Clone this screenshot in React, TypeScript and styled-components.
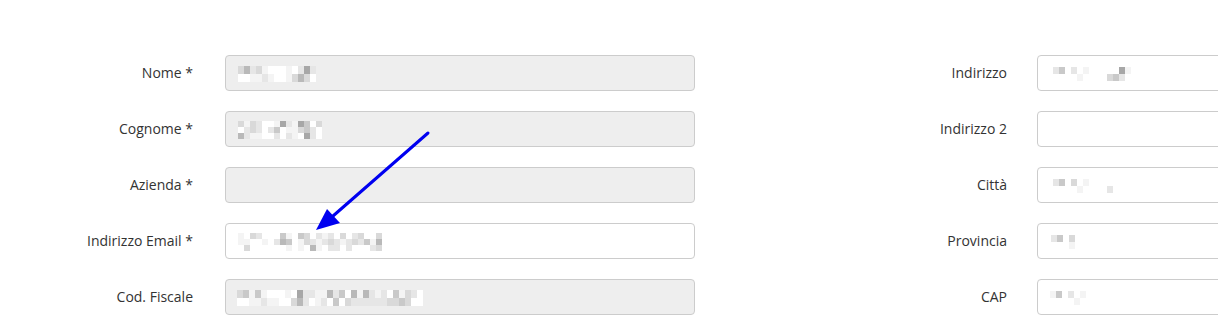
import React from 'react';
import styled, { createGlobalStyle } from 'styled-components';

const GlobalStyle = createGlobalStyle`
  body {
    margin: 0;
    background: #fff;
    font-family: "Open Sans", "Liberation Sans", sans-serif;
    overflow: hidden;
  }
`

// grey levels used by the pixelated (censored) field values
const shades: { [k: string]: string } = {
  '.': 'transparent',
  w: '#ffffff',
  a: '#f4f4f4',
  b: '#e6e6e6',
  c: '#d9d9d9',
  d: '#c9c9c9',
  e: '#b9b9b9',
  f: '#a7a7a7',
}

type Field = {
  label: string
  disabled?: boolean
  blur?: string[]
  cellH?: number
  offset?: number
}

const leftFields: Field[] = [
  { label: 'Nome *', disabled: true, cellH: 8, blur: ['cebcawwwawbfb', 'wwaabawwacecw'] },
  { label: 'Cognome *', disabled: true, blur: ['cacbwwafbafdwc', 'wbcbwbdwaacdbw', 'ebaawwbwbawfbw'] },
  { label: 'Azienda *', disabled: true },
  {
    label: 'Indirizzo Email *',
    blur: ['a.cb...da.dc.bab.c.bc..c', 'aa..a.bed.acbabcbabcbdae', '.c......a.a.ea.bb.b...bc'],
  },
  {
    label: 'Cod. Fiscale',
    disabled: true,
    cellH: 8,
    offset: 11,
    blur: ['cdadawwwawfbbaaebdweaebabwdacbw', 'wwaabaawwcebwabwdwcbbbbbbccdcww'],
  },
]

const rightFields: Field[] = [
  { label: 'Indirizzo', cellH: 7, offset: 15, blur: ['bd.b.a.....fa', '....a....cdb.'] },
  { label: 'Indirizzo 2' },
  { label: 'Città', cellH: 7, offset: 15, blur: ['bd.c.a', '....a....b'] },
  { label: 'Provincia', cellH: 7, offset: 13, blur: ['bd.c', '...a'] },
  { label: 'CAP', cellH: 7, offset: 12, blur: ['ad.b.a', '....a'] },
]

function Mosaic({ rows, cellH }: { rows: string[]; cellH: number }) {
  return (
    <MosaicGrid>
      {rows.map((r, i) => (
        <MosaicRow key={i}>
          {r.split('').map((ch, j) => (
            <Cell key={j} $color={shades[ch]} $h={cellH} />
          ))}
        </MosaicRow>
      ))}
    </MosaicGrid>
  )
}

function FormColumn({ fields, $labelWidth, $gap, $inputWidth }: {
  fields: Field[]
  $labelWidth: number
  $gap: number
  $inputWidth: number
}) {
  return (
    <Column $labelWidth={$labelWidth} $gap={$gap} $inputWidth={$inputWidth}>
      {fields.map(f => (
        <React.Fragment key={f.label}>
          <Label>{f.label}</Label>
          <FieldBox $disabled={f.disabled} $offset={f.offset ?? 12}>
            {f.blur && <Mosaic rows={f.blur} cellH={f.cellH ?? 6} />}
          </FieldBox>
        </React.Fragment>
      ))}
    </Column>
  )
}

function App() {
  return (
    <Page>
      <GlobalStyle />
      <FormColumn fields={leftFields} $labelWidth={193} $gap={32} $inputWidth={470} />
      <FormColumn fields={rightFields} $labelWidth={312} $gap={30} $inputWidth={300} />
      <Arrow width="1218" height="331" viewBox="0 0 1218 331">
        <line x1="428" y1="133" x2="333" y2="216" stroke="#0000f0" strokeWidth="3" strokeLinecap="round" />
        <polygon points="316,230 327,209 340,223" fill="#0000f0" />
      </Arrow>
    </Page>
  )
}

const Page = styled.div`
  position: relative;
  display: flex;
  padding-top: 55px;
  width: 1218px;
  height: 331px;
  box-sizing: border-box;
  overflow: hidden;
`

const Column = styled.div<{ $labelWidth: number; $gap: number; $inputWidth: number }>`
  display: grid;
  grid-template-columns: ${p => p.$labelWidth}px ${p => p.$inputWidth}px;
  column-gap: ${p => p.$gap}px;
  row-gap: 20px;
  align-items: center;
  align-content: start;
  flex-shrink: 0;
`

const Label = styled.label`
  text-align: right;
  font-size: 14px;
  color: #333;
  padding-bottom: 1px;
`

const FieldBox = styled.div<{ $disabled?: boolean; $offset: number }>`
  height: 36px;
  box-sizing: border-box;
  border: 1px solid #ccc;
  border-radius: 4px;
  background: ${p => (p.$disabled ? '#eee' : '#fff')};
  display: flex;
  align-items: center;
  padding-left: ${p => p.$offset}px;
  padding-top: 2px;
`

const MosaicGrid = styled.div`
  display: flex;
  flex-direction: column;
`

const MosaicRow = styled.div`
  display: flex;
`

const Cell = styled.span<{ $color: string; $h: number }>`
  width: 6px;
  height: ${p => p.$h}px;
  background: ${p => p.$color};
`

const Arrow = styled.svg`
  position: absolute;
  left: 0;
  top: 0;
  pointer-events: none;
`

export default App;
